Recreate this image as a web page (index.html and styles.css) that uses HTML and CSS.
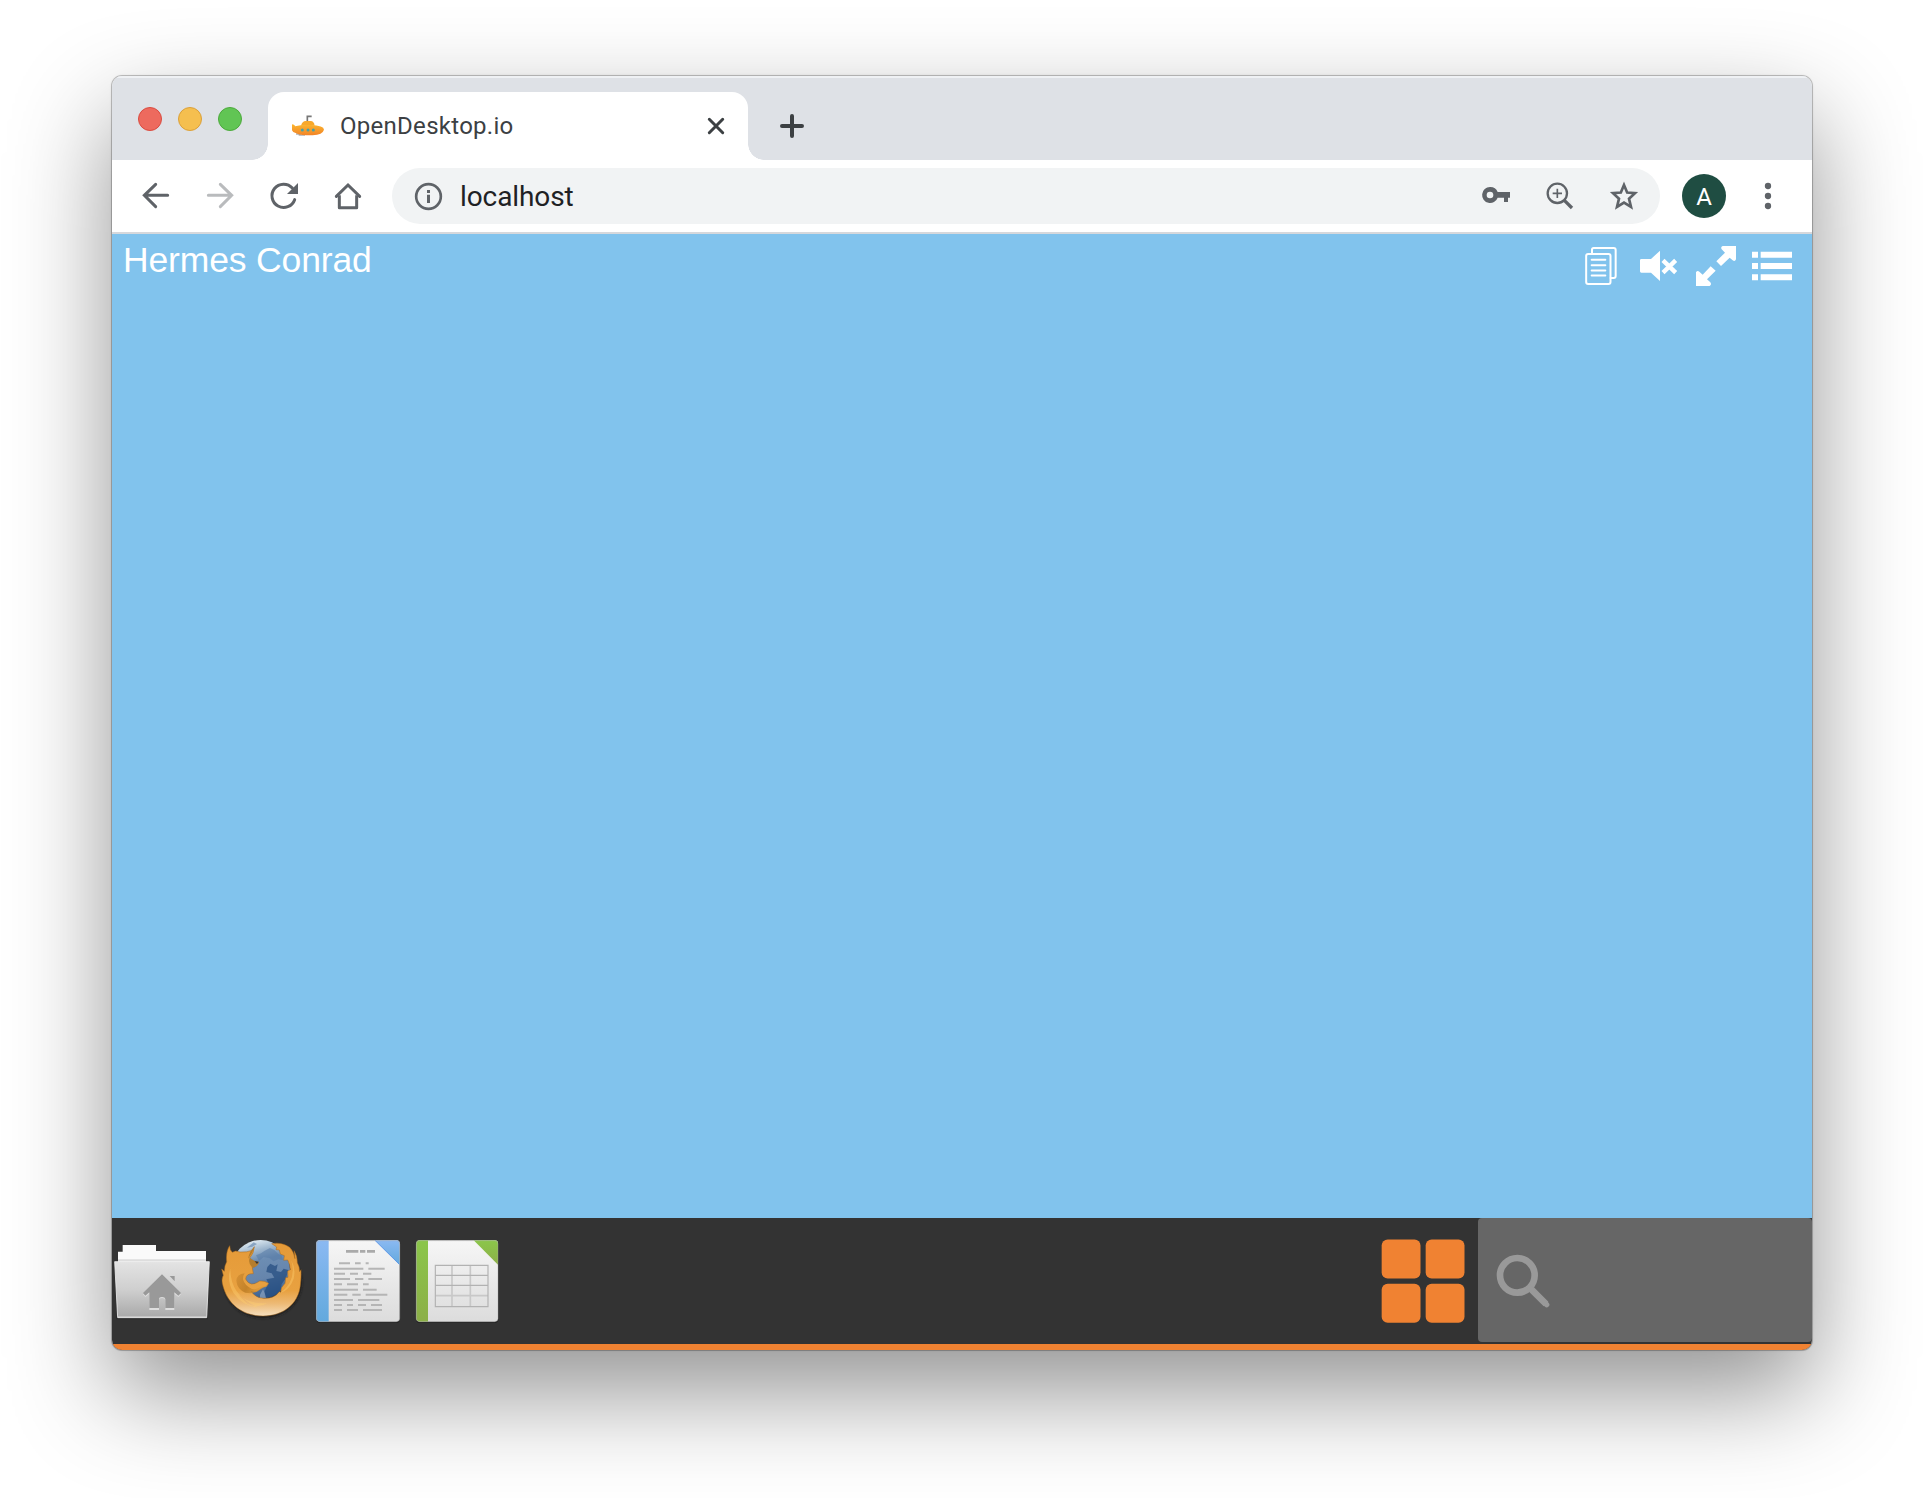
FILE: index.html
```html
<!DOCTYPE html>
<html lang="en">
<head>
<meta charset="utf-8">
<title>OpenDesktop.io</title>
<link rel="stylesheet" href="styles.css">
</head>
<body>
<div class="window">
  <header class="tabstrip">
    <div class="lights"><i class="light red"></i><i class="light yellow"></i><i class="light green"></i></div>
    <div class="tab">
      <svg class="favicon" viewBox="36 45 96 69">
        <defs><linearGradient id="sub" x1="0" y1="0" x2="0" y2="1"><stop offset="0" stop-color="#fbb62f"/><stop offset="1" stop-color="#f28327"/></linearGradient></defs>
        <path d="M82 66V52H95" fill="none" stroke="#777" stroke-width="5"/>
        <path d="M48 105H62M56 108H75" stroke="#888" stroke-width="3"/>
        <path d="M63 80Q67 66 77 66H92Q102 66 104 80Z" fill="#f8a82b"/>
        <path d="M36 76Q43 76 46 82Q62 77 92 78Q132 80 132 92Q128 107 98 109H79Q55 107 47 102Q38 101 36 94Z" fill="url(#sub)"/>
        <g fill="#4ba0a2"><circle cx="67" cy="93" r="4.5"/><circle cx="84" cy="93" r="4.5"/><circle cx="100" cy="93" r="4.5"/></g>
      </svg>
      <span class="tab-title">OpenDesktop.io</span>
      <svg class="close" viewBox="0 0 18 18"><path d="M2.3 2.3 15.7 15.7M15.7 2.3 2.3 15.7"/></svg>
    </div>
    <svg class="plus" viewBox="0 0 24 24"><path d="M12 2V22M2 12H22"/></svg>
  </header>

  <div class="toolbar">
    <svg class="icon" viewBox="108 333 120 120"><path class="line" d="M203 391H133M167 358 133 391 167 425" stroke-linecap="round"/></svg>
    <svg class="icon dim" viewBox="300 333 120 120"><path class="line" d="M325 391H395M361 358 395 391 361 425" stroke-linecap="round"/></svg>
    <svg class="icon" viewBox="492 333 120 120"><path class="line" d="M584 404A35 35 0 1 1 577 369" stroke-linecap="round"/><path d="M594 354V387H561Z"/></svg>
    <svg class="icon" viewBox="684 333 120 120"><path class="line" d="M709 394 744 360 779 394" stroke-linecap="round"/><path class="line" d="M718 391V428H770V391" stroke-linejoin="round"/></svg>
    <div class="omnibox">
      <svg class="icon" viewBox="924 333 120 120"><circle class="line info" cx="985.5" cy="394.5" r="37"/><path d="M981 375h9v9h-9zM981 389h9v25h-9z"/></svg>
      <span class="url">localhost</span>
      <svg class="icon" viewBox="108 108 120 120"><path fill-rule="evenodd" d="M150 141A24 24 0 1 0 173 173H192V186H204V173H210V156H173A24 24 0 0 0 150 141ZM150 155A10 10 0 1 1 150 175A10 10 0 1 1 150 155Z"/></svg>
      <svg class="icon" viewBox="300 108 120 120"><circle class="line lens" cx="352" cy="160" r="29"/><path class="line cross" d="M352 146V174M338 160H366"/><path class="line handle" d="M373 181 396 204"/></svg>
      <svg class="icon" viewBox="492 108 120 120"><path class="line star" d="M552 135 561.5 157.5 585 159.5 567 176 573 201 552 188 531 201 537 176 519 159.5 542.5 157.5Z"/></svg>
    </div>
    <div class="avatar">A</div>
    <svg class="icon" viewBox="924 108 120 120"><circle cx="984" cy="138" r="9.5"/><circle cx="984" cy="168" r="9.5"/><circle cx="984" cy="198" r="9.5"/></svg>
  </div>

  <main class="desktop">
    <div class="user">Hermes Conrad</div>
    <div class="status">
      <svg viewBox="414 315 126 126"><g fill="none" stroke="#fff" stroke-width="6"><rect x="438.5" y="342" width="73" height="90" rx="6"/><path d="M456 342V329Q456 324 461 324H521Q527 324 527 330V408Q527 414 521 414H512M455 359.5H496M455 375.5H496M455 391.5H496M455 406.5H496" stroke-linecap="round"/></g></svg>
      <svg viewBox="588 315 126 126"><path fill="#fff" d="M600 361Q600 357 604 357H633L660 332V423L633 398H604Q600 398 600 394Z"/><path d="M669 361 707 398M707 361 669 398" stroke="#fff" stroke-width="13"/></svg>
      <svg viewBox="762 315 126 126"><path fill="#fff" d="M848 318H888V358Q885 366 878 361L869 353 843 378 829 364 855 338 845 328Q841 321 848 318ZM768 397Q772 390 778 395L788 404 812 379 827 392 801 418 811 427Q816 434 809 438H768Z"/></svg>
      <svg viewBox="936 315 126 126"><path fill="#fff" d="M936 335h18v18h-18zM962 335h94v18h-94zM936 369h18v18h-18zM962 369h94v18h-94zM936 403h18v18h-18zM962 403h94v18h-94z"/></svg>
    </div>
  </main>

  <footer class="taskbar">
    <svg class="app" viewBox="21 24 300 378">
      <defs><linearGradient id="fold" x1="0" y1="0" x2="0" y2="1"><stop offset="0" stop-color="#e3e3e3"/><stop offset=".5" stop-color="#cfcfcf"/><stop offset="1" stop-color="#a8a8a8"/></linearGradient></defs>
      <path d="M34 317H308V328H34Z" fill="#1b1b1b" opacity=".55"/>
      <path d="M39 158V125H53V105H153V123H303V158Z" fill="#fafafa"/>
      <path d="M39 148H303V155H39Z" fill="#ddd"/>
      <path d="M29 155H313L305 323H38Z" fill="url(#fold)" stroke="#eee" stroke-width="2.5"/>
      <path d="M39 321H304" stroke="#ddd" stroke-width="3"/>
      <path d="M114 253 171 197 228 253 220 261 208 251V300H181V270Q180 264 171 264 162 264 162 270V300H133V251L121 261Z" fill="#dedede"/>
      <path d="M114 249 171 193 228 249 220 257 208 247V294H181V267Q180 261 171 261 162 261 162 267V294H133V247L121 257ZM194 198H209V214Z" fill="#999"/>
    </svg>
    <svg class="app" viewBox="-9 -36 300 378">
      <defs>
        <linearGradient id="globe" x1=".4" y1="0" x2=".65" y2="1"><stop offset="0" stop-color="#e0ebf2"/><stop offset=".17" stop-color="#a0b8cf"/><stop offset=".34" stop-color="#6c8db3"/><stop offset=".65" stop-color="#6685ac"/><stop offset="1" stop-color="#315a8c"/></linearGradient>
        <linearGradient id="fox" x1="0" y1="0" x2="0" y2="1"><stop offset="0" stop-color="#e59a38"/><stop offset=".65" stop-color="#e8a140"/><stop offset=".83" stop-color="#edba76"/><stop offset="1" stop-color="#f5dfbf"/></linearGradient>
        <linearGradient id="cheek" x1="0" y1="0" x2="1" y2=".3"><stop offset="0" stop-color="#d08b31"/><stop offset=".5" stop-color="#b37621"/><stop offset="1" stop-color="#e9a13b"/></linearGradient>
        <filter id="soft" x="-20%" y="-20%" width="140%" height="140%"><feGaussianBlur stdDeviation="5"/></filter>
      </defs>
      <ellipse cx="144" cy="158" rx="116" ry="106" fill="#181818" filter="url(#soft)"/>
      <circle cx="137" cy="118" r="88" fill="url(#globe)"/>
      <path d="M123 76 138 70 149 62 165 54 178 60 190 72 200 76 204 90 190 88 176 94 163 84 146 82 132 92ZM96 53 116 37 126 42 112 50Z" fill="#557aa6" opacity=".55"/>
      <path d="M157 111 166 101 180 108 188 103 184 123 198 126 206 116 220 120 213 145 200 162 196 187 180 202 150 205 147 190 152 176 160 160 154 148 178 143 170 130 154 126Z" fill="#244c80" opacity=".72"/>
      <path d="M135 194 144 178 149 188 153 204H135Z" fill="#8da4c0" opacity=".7"/>
      <path d="M44 47Q44 60 52 67L62 63 75 66Q98 67 108 62Q115 58 118 50Q117 70 104 84Q116 96 131 97Q129 109 112 113L115 131Q93 130 92 147Q98 160 110 162Q120 163 134 153Q148 151 161 160Q158 170 143 172C130 180 124 190 108 184Q122 204 147 205Q178 206 193 185L197 187Q197 172 210 160L212 143 219 142 218 123 226 119Q225 103 218 90L206 91 208 77 196 72 193 60 183 59 185 51 170 41Q200 35 224 52Q237 66 240 86L237 62Q247 77 247 98Q254 110 254 125L258 119Q259 143 256 166C250 222 205 258 144 258C82 258 35 222 22 160Q19 145 25 136L20 117 28 124Q28 107 35 95Q32 65 44 47Z" fill="url(#fox)" stroke="#a9681c" stroke-width="1.5"/>
      <path d="M89 130Q65 133 64 152Q66 177 91 188Q119 193 133 180Q145 171 158 168L150 165C140 166 130 180 111 177Q88 166 84 148Q84 136 89 130Z" fill="url(#cheek)" opacity=".7"/>
      <path d="M104 84Q116 96 131 97Q128 108 112 113Q98 99 104 84ZM118 50Q103 64 99 86Q113 70 118 50Z" fill="#a97529" opacity=".8"/>
      <path d="M119 94 131 95 126 102Z" fill="#333"/>
      <path d="M46 116Q34 153 56 190Q84 229 128 232Q87 214 65 184Q46 156 46 116ZM229 91Q246 154 195 190Q224 180 236 146Q243 116 229 91ZM69 193Q103 224 157 219Q130 237 97 221Z" fill="#ffd071" opacity=".4"/>
    </svg>
    <svg class="app" viewBox="21 24 300 378">
      <defs><linearGradient id="paper" x1="0" y1="0" x2="0" y2="1"><stop offset="0" stop-color="#f6f6f6"/><stop offset="1" stop-color="#dcdcdc"/></linearGradient><linearGradient id="blue" x1="0" y1="0" x2="0" y2="1"><stop offset="0" stop-color="#8bb9f2"/><stop offset="1" stop-color="#62a9dd"/></linearGradient></defs>
      <rect x="34" y="94" width="251" height="245" rx="11" fill="#222"/>
      <rect x="34" y="91" width="250" height="244" rx="10" fill="url(#paper)"/>
      <path d="M71 91H44Q34 91 34 101V325Q34 335 44 335H71Z" fill="url(#blue)"/>
      <path d="M210 91H275Q284 91 284 101V164Z" fill="url(#blue)"/><path d="M210 91 284 164" stroke="#5d98ea" stroke-width="3"/>
      <rect x="35" y="92" width="249" height="243" rx="10" fill="none" stroke="#aaa" stroke-opacity=".6" stroke-width="2.5"/>
      <path d="M123 124H160M165 124H181M186 124H210" stroke="#aaa" stroke-width="8"/>
      <path d="M102 160H135M150 160H167M182 160H191M87 176H175M190 176H239M87 191H120M135 191H159M174 191H199M87 207H135M150 207H175M190 207H231M87 223H111M126 223H159M174 223H191M87 239H159M174 239H215M87 254H127M142 254H167M182 254H247M87 270H144M159 270H223M87 285H111M126 285H144M159 285H183M198 285H231M87 300H111M126 300H159M174 300H231" stroke="#b5b5b5" stroke-width="6"/>
    </svg>
    <svg class="app" viewBox="321 24 300 378">
      <defs><linearGradient id="green" x1="0" y1="0" x2="0" y2="1"><stop offset="0" stop-color="#8bc64a"/><stop offset="1" stop-color="#8caf48"/></linearGradient></defs>
      <rect x="333" y="94" width="247" height="245" rx="11" fill="#222"/>
      <rect x="334" y="91" width="245" height="244" rx="10" fill="url(#paper)"/>
      <path d="M369 91H344Q334 91 334 101V325Q334 335 344 335H369Z" fill="url(#green)"/>
      <path d="M506 91H569Q579 91 579 101V164Z" fill="url(#green)"/>
      <rect x="334" y="92" width="245" height="243" rx="10" fill="none" stroke="#aaa" stroke-opacity=".5" stroke-width="2.5"/>
      <path d="M391 257H549M441 166V290M496 166V290" stroke="#c8c8c8" stroke-width="5"/><path d="M391 166H549V290H391ZM391 196H549M391 226H549" fill="none" stroke="#b2b2b2" stroke-width="3.5"/>
    </svg>
    <svg class="launcher" viewBox="63 117 252 252"><rect x="65" y="118.5" width="116.5" height="117" rx="18"/><rect x="197" y="118.5" width="116.5" height="117" rx="18"/><rect x="65" y="251" width="116.5" height="117" rx="18"/><rect x="197" y="251" width="116.5" height="117" rx="18"/></svg>
    <div class="search"><svg viewBox="408 162 162 162"><circle cx="472" cy="226" r="52" fill="none" stroke="#999" stroke-width="20"/><path d="M514 268 558 312" stroke="#999" stroke-width="20"/><path d="M509 263 560 314" stroke="#999" stroke-width="16" stroke-linecap="round"/></svg></div>
  </footer>
</div>
</body>
</html>
```
FILE: styles.css
```css
* { box-sizing: border-box; }
body { margin: 0; padding: 76px 112px 0; height: 1498px; background: #fff; overflow: hidden; }
svg { display: block; flex: none; }
.window {
  width: 1700px; height: 1274px; display: flex; flex-direction: column;
  border-radius: 10px; overflow: hidden;
  box-shadow: 0 0 0 1px rgba(0,0,0,.2), 0 0 3px rgba(0,0,0,.15), 0 42px 100px rgba(0,0,0,.43);
}
.tabstrip { height: 84px; display: flex; padding-left: 26px; background: #dee1e6; box-shadow: inset 0 2px #eff1f4; }
.lights { display: flex; gap: 16px; padding-top: 31px; width: 130px; }
.light { width: 24px; height: 24px; border-radius: 50%; border: 1px solid; }
.red { background: #ed6a5e; border-color: #da4b40; }
.yellow { background: #f5bf4f; border-color: #dba03a; }
.green { background: #61c554; border-color: #4caa3c; }
.tab {
  width: 480px; height: 68px; margin-top: 16px; padding: 0 23px 0 24px;
  display: flex; align-items: center; background: #fff; border-radius: 16px 16px 0 0; position: relative;
}
.tab::before, .tab::after { content: ""; position: absolute; bottom: 0; width: 16px; height: 16px; }
.tab::before { left: -16px; background: radial-gradient(circle at 0 0, transparent 15.5px, #fff 16px); }
.tab::after { right: -16px; background: radial-gradient(circle at 100% 0, transparent 15.5px, #fff 16px); }
.favicon { width: 32px; height: 23px; margin-bottom: 2px; }
.tab-title { flex: 1; margin-left: 16px; font: 24px/30px Roboto, sans-serif; letter-spacing: .28px; color: #3c4043; }
.close { width: 18px; height: 18px; }
.close path, .plus path { fill: none; stroke: #3c4043; stroke-width: 3; stroke-linecap: round; }
.plus { width: 24px; height: 24px; margin: 38px 0 0 32px; }
.plus path { stroke-width: 4; }
.toolbar {
  height: 74px; display: flex; align-items: center; gap: 24px; padding: 0 24px;
  background: #fff; border-bottom: 2px solid #d6d8dc;
}
.icon { width: 40px; height: 40px; fill: #5f6368; }
.line { fill: none; stroke: #5f6368; stroke-width: 9px; }
.info { stroke-width: 8px; }
.lens { stroke-width: 7px; }
.cross { stroke-width: 5px; }
.handle { stroke-width: 10px; }
.star { stroke-width: 8px; }
.dim { opacity: .43; }
.omnibox { flex: 1; height: 56px; display: flex; align-items: center; gap: 24px; padding: 0 16px; border-radius: 28px; background: #f1f3f4; }
.url { flex: 1; margin-left: -12px; padding-top: 2px; font: 28px/34px Roboto, sans-serif; letter-spacing: -.1px; color: #202124; }
.avatar { width: 44px; height: 44px; margin: 0 -2px; border-radius: 50%; background: #1f4d42; color: #fff; font: 24px/46px Roboto, sans-serif; text-align: center; }
.desktop { height: 984px; display: flex; justify-content: space-between; padding: 0 18px 0 11px; background: #81c3ed; }
.user { padding-top: 6px; font: 35.5px/41px "Liberation Sans", Arial, sans-serif; letter-spacing: -.15px; color: #fff; }
.status { display: flex; gap: 16px; padding-top: 11px; }
.status svg { width: 42px; height: 42px; }
.taskbar { height: 132px; display: flex; background: #333; border-bottom: 6px solid #f08232; }
.app { width: 100px; height: 126px; }
.launcher { width: 84px; height: 84px; margin: 21px 13px 0 auto; fill: #f08232; }
.search { width: 334px; height: 124px; padding: 36px 0 0 18px; background: #666; border-radius: 4px; }
.search svg { width: 54px; height: 54px; }
```
